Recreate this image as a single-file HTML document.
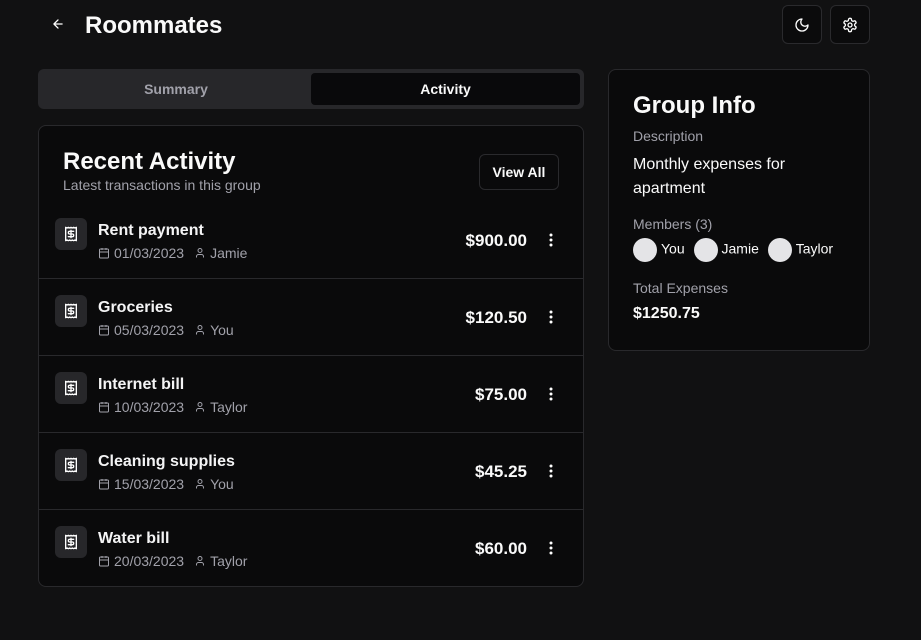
<!DOCTYPE html>
<html><head><meta charset="utf-8"><style>
*{box-sizing:border-box;margin:0;padding:0}
body{width:921px;height:640px;background:#111112;font-family:"Liberation Sans",sans-serif;color:#fafafa;position:relative;overflow:hidden}
.abs{position:absolute}
.btn{position:absolute;width:40px;height:39px;border:1px solid #2a2a2d;border-radius:6px;background:#0b0b0c;display:flex;align-items:center;justify-content:center}
.card{position:absolute;background:#0a0a0b;border:1px solid #29292c;border-radius:8px}
.row{position:absolute;left:0;right:0;height:77px;border-bottom:1px solid #29292c}
.ic{position:absolute;left:16px;top:16px;width:32px;height:32px;border-radius:6px;background:#27272a;display:flex;align-items:center;justify-content:center}
.t{position:absolute;left:59px;top:20px;font-size:16px;font-weight:bold;color:#f4f4f5}
.m{position:absolute;left:59px;top:43px;font-size:14px;color:#a1a1aa;display:flex;align-items:center;white-space:nowrap}
.amt{position:absolute;right:56px;top:29px;font-size:17px;font-weight:bold}
.dots{position:absolute;right:30px;top:31px}
.av{display:inline-block;width:24px;height:24px;border-radius:50%;background:#e4e4e7;vertical-align:middle;margin-right:4px}
</style></head><body>
<svg class="abs" style="left:51px;top:17px" width="14" height="14" viewBox="0 0 24 24" fill="none" stroke="#fff" stroke-width="2.2" stroke-linecap="round" stroke-linejoin="round"><path d="M19 12H5M12 19l-7-7 7-7"/></svg>
<div class="abs" style="left:85px;top:12px;font-size:24px;font-weight:bold">Roommates</div>
<div class="btn" style="left:782px;top:5px"><svg width="16" height="16" viewBox="0 0 24 24" fill="none" stroke="#fff" stroke-width="2" stroke-linecap="round" stroke-linejoin="round"><path d="M12 3a6 6 0 0 0 9 9 9 9 0 1 1-9-9Z"/></svg></div>
<div class="btn" style="left:830px;top:5px"><svg width="16" height="16" viewBox="0 0 24 24" fill="none" stroke="#fff" stroke-width="2" stroke-linecap="round" stroke-linejoin="round"><path d="M12.22 2h-.44a2 2 0 0 0-2 2v.18a2 2 0 0 1-1 1.73l-.43.25a2 2 0 0 1-2 0l-.15-.08a2 2 0 0 0-2.730.73l-.22.38a2 2 0 0 0 .73 2.73l.15.1a2 2 0 0 1 1 1.72v.51a2 2 0 0 1-1 1.74l-.15.09a2 2 0 0 0-.73 2.73l.22.38a2 2 0 0 0 2.73.73l.15-.08a2 2 0 0 1 2 0l.43.25a2 2 0 0 1 1 1.73V20a2 2 0 0 0 2 2h.44a2 2 0 0 0 2-2v-.18a2 2 0 0 1 1-1.73l.43-.25a2 2 0 0 1 2 0l.15.08a2 2 0 0 0 2.73-.73l.22-.39a2 2 0 0 0-.73-2.73l-.15-.08a2 2 0 0 1-1-1.74v-.5a2 2 0 0 1 1-1.74l.15-.09a2 2 0 0 0 .73-2.73l-.22-.38a2 2 0 0 0-2.73-.73l-.15.08a2 2 0 0 1-2 0l-.43-.25a2 2 0 0 1-1-1.73V4a2 2 0 0 0-2-2z"/><circle cx="12" cy="12" r="3"/></svg></div>

<div class="abs" style="left:38px;top:69px;width:546px;height:40px;background:#27272a;border-radius:6px"></div>
<div class="abs" style="left:42px;top:73px;width:268px;height:32px;line-height:32px;text-align:center;font-size:14px;font-weight:bold;color:#a1a1aa">Summary</div>
<div class="abs" style="left:311px;top:73px;width:269px;height:32px;line-height:32px;text-align:center;font-size:14px;font-weight:bold;background:#09090b;border-radius:4px">Activity</div>

<div class="card" style="left:38px;top:125px;width:546px;height:462px">
 <div class="abs" style="left:24px;top:22px;font-size:24px;font-weight:bold">Recent Activity</div>
 <div class="abs" style="left:24px;top:51px;font-size:14px;color:#a1a1aa">Latest transactions in this group</div>
 <div class="abs" style="left:440px;top:28px;width:80px;height:36px;border:1px solid #2a2a2d;border-radius:6px;background:#0a0a0b;font-size:14px;font-weight:bold;text-align:center;line-height:34px">View All</div>
</div>
<div id="rows" class="abs" style="left:39px;top:202px;width:544px"></div>

<div class="card" style="left:608px;top:69px;width:262px;height:282px">
 <div class="abs" style="left:24px;top:22px;font-size:24px;font-weight:bold">Group Info</div>
 <div class="abs" style="left:24px;top:58px;font-size:14px;color:#a1a1aa">Description</div>
 <div class="abs" style="left:24px;top:83px;font-size:16px;line-height:24px;width:200px">Monthly expenses for apartment</div>
 <div class="abs" style="left:24px;top:146px;font-size:14px;color:#a1a1aa">Members (3)</div>
 <div class="abs" style="left:24px;top:168px;font-size:14px;white-space:nowrap"><span class="av"></span>You <span class="av" style="margin-left:5px"></span>Jamie <span class="av" style="margin-left:5px"></span>Taylor</div>
 <div class="abs" style="left:24px;top:210px;font-size:14px;color:#a1a1aa">Total Expenses</div>
 <div class="abs" style="left:24px;top:235px;font-size:16px;font-weight:bold">$1250.75</div>
</div>

<script>
var d=[["Rent payment","01/03/2023","Jamie","$900.00"],["Groceries","05/03/2023","You","$120.50"],["Internet bill","10/03/2023","Taylor","$75.00"],["Cleaning supplies","15/03/2023","You","$45.25"],["Water bill","20/03/2023","Taylor","$60.00"]];
var h="";
var cal='<svg width="12" height="12" viewBox="0 0 24 24" fill="none" stroke="#a1a1aa" stroke-width="2" style="margin-right:4px"><rect x="3" y="4" width="18" height="18" rx="2"/><path d="M16 2v4M8 2v4M3 10h18"/></svg>';
var usr='<svg width="12" height="12" viewBox="0 0 24 24" fill="none" stroke="#a1a1aa" stroke-width="2" style="margin:0 4px 0 10px"><circle cx="12" cy="7" r="4"/><path d="M19 21v-2a4 4 0 0 0-4-4H9a4 4 0 0 0-4 4v2"/></svg>';
var rc='<svg width="16" height="16" viewBox="0 0 24 24" fill="none" stroke="#fff" stroke-width="2" stroke-linecap="round" stroke-linejoin="round"><path d="M4 2v20l2-1 2 1 2-1 2 1 2-1 2 1 2-1 2 1V2l-2 1-2-1-2 1-2-1-2 1-2-1-2 1Z"/><path d="M16 8h-6a2 2 0 1 0 0 4h4a2 2 0 1 1 0 4H8M12 17.5v-11"/></svg>';
var dots='<svg width="4" height="14" viewBox="0 0 4 14"><circle cx="2" cy="2" r="1.5" fill="#fff"/><circle cx="2" cy="7" r="1.5" fill="#fff"/><circle cx="2" cy="12" r="1.5" fill="#fff"/></svg>';
d.forEach(function(r,i){h+='<div class="row" style="top:'+(i*77)+'px;'+(i==4?'border-bottom:none':'')+'"><div class="ic">'+rc+'</div><div class="t">'+r[0]+'</div><div class="m">'+cal+r[1]+usr+r[2]+'</div><div class="amt">'+r[3]+'</div><div class="dots">'+dots+'</div></div>';});
document.getElementById('rows').innerHTML=h;
</script>
</body></html>
